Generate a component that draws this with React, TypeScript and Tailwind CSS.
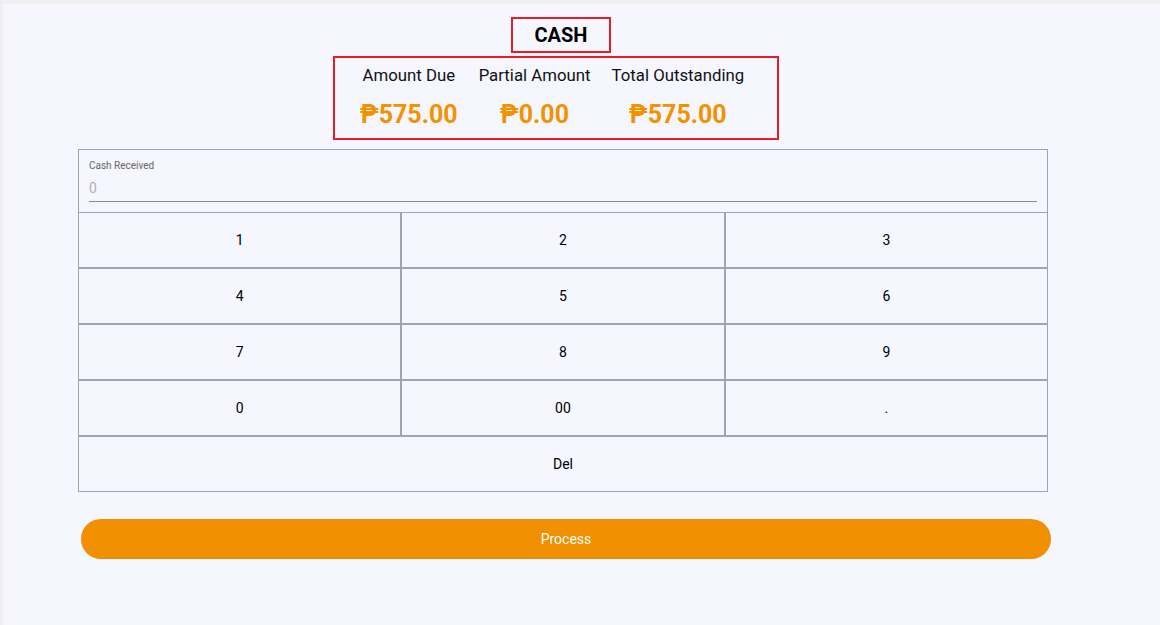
import React from "react";

// keypad layout, row by row
const keys = [
  ["1", "2", "3"],
  ["4", "5", "6"],
  ["7", "8", "9"],
  ["0", "00", "."],
];

const amounts = [
  { label: "Amount Due", value: "₱575.00" },
  { label: "Partial Amount", value: "₱0.00" },
  { label: "Total Outstanding", value: "₱575.00" },
];

export default function App() {
  return (
    <div
      className="min-h-screen bg-[#efeff1] pt-[4px] pl-[3px]"
      style={{ fontFamily: "Roboto, 'Liberation Sans', sans-serif" }}
    >
      <div className="min-h-[621px] bg-[#f5f6fe] pt-[13px] pl-[75px]">
        <div className="w-[970px]">
          {/* title */}
          <div className="ml-[433px] flex h-[36px] w-[100px] items-center justify-center border-2 border-[#e41e26]">
            <span className="text-[20px] font-bold text-black">CASH</span>
          </div>

          {/* summary */}
          <div className="ml-[255px] mt-[3px] flex h-[84px] w-[446px] gap-[21px] border-2 border-[#e41e26] pl-[25px] pt-[5px]">
            {amounts.map((a) => (
              <div key={a.label} className="flex flex-col items-center">
                <span className="text-[16.8px] leading-[24px] text-[#111]">{a.label}</span>
                <span className="mt-[13px] text-[25px] font-bold leading-[30px] text-[#f39200]">
                  {a.value}
                </span>
              </div>
            ))}
          </div>

          {/* keypad */}
          <div className="mt-[9px]">
            <div className="h-[63px] border border-b-0 border-[#a0a4ae] px-[10px] pt-[10px]">
              <div className="text-[10px] leading-[12px] text-[#666]">Cash Received</div>
              <div className="mt-[4px] h-[26px] border-b border-[#8c8c8c] text-[14px] leading-[24px] text-[#b0b0b0]">
                0
              </div>
            </div>
            {keys.map((row, i) => (
              <div key={i} className="grid grid-cols-3">
                {row.map((k) => (
                  <button
                    key={k}
                    className="h-[56px] border border-[#a0a4ae] text-[14px] text-black"
                  >
                    {k}
                  </button>
                ))}
              </div>
            ))}
            <button className="block h-[56px] w-full border border-[#a0a4ae] text-[14px] text-black">
              Del
            </button>
          </div>

          <button className="ml-[3px] mt-[27px] h-[40px] w-[970px] rounded-full bg-[#f09000] text-[14px] text-white">
            Process
          </button>
        </div>
      </div>
    </div>
  );
}
